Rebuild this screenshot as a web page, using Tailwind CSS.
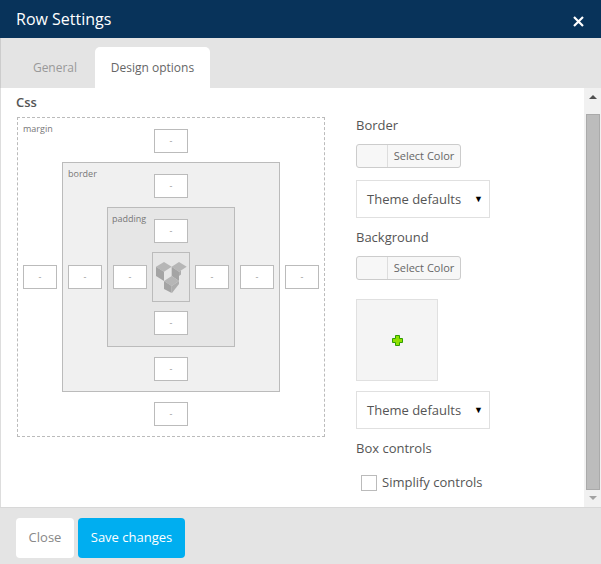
<!DOCTYPE html>
<html lang="en">
<head>
    <meta charset="UTF-8">
    <title>Row Settings</title>
    <script src="https://cdn.jsdelivr.net/npm/@tailwindcss/browser@4"></script>
</head>
<body class="w-[601px] h-[564px] overflow-hidden bg-[#e4e4e4] font-['Open_Sans',sans-serif] text-[#555]">
    <div class="flex flex-col h-[564px]">
        <!-- Header -->
        <header class="h-[38px] bg-[#08335a] flex items-center justify-between pl-4 pr-[17px] shrink-0">
            <h1 class="text-[16px] text-white leading-none">Row Settings</h1>
            <svg class="w-[11px] h-[11px] mt-[4px]" viewBox="0 0 11 11"><path d="M1 1l9 9M10 1l-9 9" stroke="#fff" stroke-width="2.2" fill="none"/></svg>
        </header>

        <!-- Tabs -->
        <nav class="h-[50px] pt-[9px] pl-4 flex shrink-0 border-l border-[#ccc] text-[12px]">
            <div class="w-[78px] flex items-center justify-center text-[#999] pr-[2px]">General</div>
            <div class="w-[115px] bg-white rounded-t-[5px] flex items-center justify-center text-[#666]">Design options</div>
        </nav>

        <!-- Body -->
        <div class="h-[419px] flex bg-white border-l border-[#ddd] shrink-0">
            <main class="flex-1 flex pl-[15px]">
                <!-- Css box -->
                <section class="w-[340px]">
                    <h2 class="text-[13px] leading-none font-semibold text-[#555] mt-[8px] mb-[8px]">Css</h2>
                    <div class="w-[308px] h-[320px] ml-[1px] border border-dashed border-[#bbb] relative grid grid-cols-[44px_1fr_44px] grid-rows-[44px_1fr_44px]">
                        <span class="absolute left-[5px] top-[5px] text-[9px] leading-[12px] text-[#777]">margin</span>
                        <div class="col-start-2 pt-[2px] flex items-center justify-center"><div class="w-[34px] h-[24px] border border-[#bbb] bg-white flex items-center justify-center text-[9px] text-[#999]">-</div></div>
                        <div class="row-start-2 flex items-center justify-center"><div class="w-[34px] h-[24px] border border-[#bbb] bg-white flex items-center justify-center text-[9px] text-[#999]">-</div></div>

                        <div class="row-start-2 col-start-2 bg-[#f0f0f0] border border-[#bbb] relative grid grid-cols-[44px_1fr_44px] grid-rows-[44px_1fr_44px]">
                            <span class="absolute left-[5px] top-[5px] text-[9px] leading-[12px] text-[#777]">border</span>
                            <div class="col-start-2 pt-[2px] flex items-center justify-center"><div class="w-[34px] h-[24px] border border-[#bbb] bg-white flex items-center justify-center text-[9px] text-[#999]">-</div></div>
                            <div class="row-start-2 flex items-center justify-center"><div class="w-[34px] h-[24px] border border-[#bbb] bg-white flex items-center justify-center text-[9px] text-[#999]">-</div></div>

                            <div class="row-start-2 col-start-2 bg-[#e6e6e6] border border-[#bbb] relative grid grid-cols-[44px_1fr_44px] grid-rows-[44px_1fr_44px]">
                                <span class="absolute left-[4px] top-[5px] text-[9px] leading-[12px] text-[#777]">padding</span>
                                <div class="col-start-2 pt-[2px] flex items-center justify-center"><div class="w-[34px] h-[24px] border border-[#bbb] bg-white flex items-center justify-center text-[9px] text-[#999]">-</div></div>
                                <div class="row-start-2 flex items-center justify-center"><div class="w-[34px] h-[24px] border border-[#bbb] bg-white flex items-center justify-center text-[9px] text-[#999]">-</div></div>

                                <div class="row-start-2 col-start-2 border border-[#bbb] flex items-center justify-center">
                                    <!-- logo: three isometric cubes -->
                                    <svg class="w-[32px] h-[32px]" viewBox="0 0 32 32">
                                        <path d="M1 5.7L9 1l7.7 4.7-7.7 5z" fill="#b6b6b6"/>
                                        <path d="M1 5.7l8 5V20l-8-5z" fill="#a4a4a4"/>
                                        <path d="M16.7 5.7L24 1l7.7 4.7-7.7 5z" fill="#b6b6b6"/>
                                        <path d="M16.7 5.7l7.3 5V20l-7.3-5z" fill="#a4a4a4"/>
                                        <path d="M24 10.7l2-1.3v4L24 15z" fill="#adadad"/>
                                        <path d="M9 20l7.7-5 7.3 5-7.3 5z" fill="#b6b6b6"/>
                                        <path d="M9 20l7.7 5v7L9 28z" fill="#a4a4a4"/>
                                        <path d="M16.7 25l7.3-5v3l-7 9z" fill="#adadad"/>
                                    </svg>
                                </div>

                                <div class="row-start-2 col-start-3 flex items-center justify-center"><div class="w-[34px] h-[24px] border border-[#bbb] bg-white flex items-center justify-center text-[9px] text-[#999]">-</div></div>
                                <div class="row-start-3 col-start-2 pb-[2px] flex items-center justify-center"><div class="w-[34px] h-[24px] border border-[#bbb] bg-white flex items-center justify-center text-[9px] text-[#999]">-</div></div>
                            </div>

                            <div class="row-start-2 col-start-3 flex items-center justify-center"><div class="w-[34px] h-[24px] border border-[#bbb] bg-white flex items-center justify-center text-[9px] text-[#999]">-</div></div>
                            <div class="row-start-3 col-start-2 flex items-center justify-center"><div class="w-[34px] h-[24px] border border-[#bbb] bg-white flex items-center justify-center text-[9px] text-[#999]">-</div></div>
                        </div>

                        <div class="row-start-2 col-start-3 flex items-center justify-center"><div class="w-[34px] h-[24px] border border-[#bbb] bg-white flex items-center justify-center text-[9px] text-[#999]">-</div></div>
                        <div class="row-start-3 col-start-2 flex items-center justify-center"><div class="w-[34px] h-[24px] border border-[#bbb] bg-white flex items-center justify-center text-[9px] text-[#999]">-</div></div>
                    </div>
                </section>

                <!-- Right column -->
                <section class="w-[140px] text-[13px] pt-[28px]">
                    <h3 class="leading-[18px] h-[18px]">Border</h3>
                    <div class="mt-[10px] w-[105px] h-[24px] flex border border-[#ccc] rounded-[3px] bg-[#f7f7f7]">
                        <div class="w-[31px] border-r border-[#ddd]"></div>
                        <div class="flex-1 text-[11px] leading-[22px] text-center text-[#666]">Select Color</div>
                    </div>
                    <div class="mt-[12px] w-[134px] h-[38px] border border-[#e0e0e0] flex items-center justify-between pl-[10px] pr-[6px] text-[13px] text-[#555]">
                        <span class="pt-[2px]">Theme defaults</span><span class="text-[9px] text-black">▼</span>
                    </div>
                    <h3 class="mt-[10px] leading-[18px] h-[18px]">Background</h3>
                    <div class="mt-[10px] w-[105px] h-[24px] flex border border-[#ccc] rounded-[3px] bg-[#f7f7f7]">
                        <div class="w-[31px] border-r border-[#ddd]"></div>
                        <div class="flex-1 text-[11px] leading-[22px] text-center text-[#666]">Select Color</div>
                    </div>
                    <div class="mt-[19px] w-[82px] h-[82px] bg-[#f4f4f4] border border-[#e0e0e0] flex items-center justify-center">
                        <svg class="w-[11px] h-[11px]" viewBox="0 0 11 11"><path d="M3.5.5h4v3h3v4h-3v3h-4v-3h-3v-4h3z" fill="#8fe000" stroke="#2f9e00"/></svg>
                    </div>
                    <div class="mt-[10px] w-[134px] h-[38px] border border-[#e0e0e0] flex items-center justify-between pl-[10px] pr-[6px] text-[13px] text-[#555]">
                        <span class="pt-[2px]">Theme defaults</span><span class="text-[9px] text-black">▼</span>
                    </div>
                    <h3 class="mt-[10px] leading-[18px] h-[18px]">Box controls</h3>
                    <label class="mt-[16px] ml-[5px] flex items-center gap-[5px]">
                        <span class="w-[16px] h-[16px] border border-[#bbb] bg-white"></span>
                        <span>Simplify controls</span>
                    </label>
                </section>
            </main>

            <!-- Scrollbar -->
            <div class="w-[17px] bg-[#f1f1f1] flex flex-col items-center shrink-0">
                <div class="h-[26px] pt-[7px]"><div class="w-0 h-0 border-x-[4px] border-x-transparent border-b-[4px] border-b-[#505050]"></div></div>
                <div class="w-[14px] h-[376px] bg-[#bcbcbc] border border-[#aaa]"></div>
                <div class="h-[17px] pt-[6px]"><div class="w-0 h-0 border-x-[4px] border-x-transparent border-t-[4px] border-t-[#a3a3a3]"></div></div>
            </div>
        </div>

        <!-- Footer -->
        <footer class="flex-1 border-t border-[#d8d8d8] pl-4 pt-[10px] flex gap-[4px] text-[13px]">
            <button class="w-[58px] h-[40px] bg-white rounded-[4px] text-[#888]">Close</button>
            <button class="w-[107px] h-[40px] bg-[#00aef0] rounded-[4px] text-white">Save changes</button>
        </footer>
    </div>
</body>
</html>
